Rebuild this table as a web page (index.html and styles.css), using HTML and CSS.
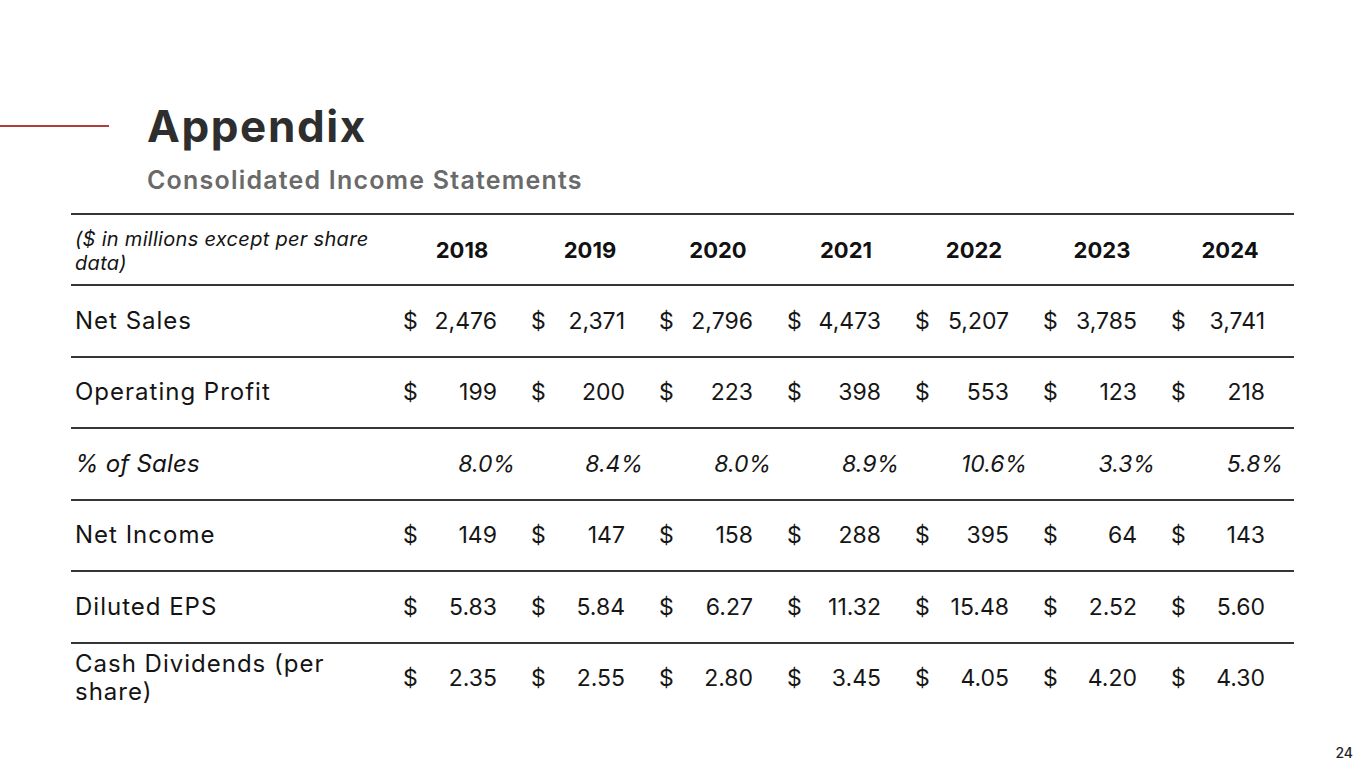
FILE: index.html
```html
<!DOCTYPE html>
<html lang="en">
<head>
<meta charset="utf-8">
<title>Appendix</title>
<link rel="stylesheet" href="styles.css">
</head>
<body>
<div class="slide">
  <div class="title-row">
    <div class="accent"></div>
    <h1 class="title">Appendix</h1>
  </div>
  <h2 class="subtitle">Consolidated Income Statements</h2>

  <div class="fin-table">
    <div class="row head">
      <div class="label note">($ in millions except per share<br>data)</div>
      <div class="year">2018</div>
      <div class="year">2019</div>
      <div class="year">2020</div>
      <div class="year">2021</div>
      <div class="year">2022</div>
      <div class="year">2023</div>
      <div class="year">2024</div>
    </div>

    <div class="row">
      <div class="label">Net Sales</div>
      <div class="val"><span>$</span><span>2,476</span></div>
      <div class="val"><span>$</span><span>2,371</span></div>
      <div class="val"><span>$</span><span>2,796</span></div>
      <div class="val"><span>$</span><span>4,473</span></div>
      <div class="val"><span>$</span><span>5,207</span></div>
      <div class="val"><span>$</span><span>3,785</span></div>
      <div class="val"><span>$</span><span>3,741</span></div>
    </div>

    <div class="row">
      <div class="label">Operating Profit</div>
      <div class="val"><span>$</span><span>199</span></div>
      <div class="val"><span>$</span><span>200</span></div>
      <div class="val"><span>$</span><span>223</span></div>
      <div class="val"><span>$</span><span>398</span></div>
      <div class="val"><span>$</span><span>553</span></div>
      <div class="val"><span>$</span><span>123</span></div>
      <div class="val"><span>$</span><span>218</span></div>
    </div>

    <div class="row">
      <div class="label em">% of Sales</div>
      <div class="pct">8.0%</div>
      <div class="pct">8.4%</div>
      <div class="pct">8.0%</div>
      <div class="pct">8.9%</div>
      <div class="pct">10.6%</div>
      <div class="pct">3.3%</div>
      <div class="pct">5.8%</div>
    </div>

    <div class="row">
      <div class="label">Net Income</div>
      <div class="val"><span>$</span><span>149</span></div>
      <div class="val"><span>$</span><span>147</span></div>
      <div class="val"><span>$</span><span>158</span></div>
      <div class="val"><span>$</span><span>288</span></div>
      <div class="val"><span>$</span><span>395</span></div>
      <div class="val"><span>$</span><span>64</span></div>
      <div class="val"><span>$</span><span>143</span></div>
    </div>

    <div class="row">
      <div class="label">Diluted EPS</div>
      <div class="val"><span>$</span><span>5.83</span></div>
      <div class="val"><span>$</span><span>5.84</span></div>
      <div class="val"><span>$</span><span>6.27</span></div>
      <div class="val"><span>$</span><span>11.32</span></div>
      <div class="val"><span>$</span><span>15.48</span></div>
      <div class="val"><span>$</span><span>2.52</span></div>
      <div class="val"><span>$</span><span>5.60</span></div>
    </div>

    <div class="row last">
      <div class="label">Cash Dividends (per<br>share)</div>
      <div class="val"><span>$</span><span>2.35</span></div>
      <div class="val"><span>$</span><span>2.55</span></div>
      <div class="val"><span>$</span><span>2.80</span></div>
      <div class="val"><span>$</span><span>3.45</span></div>
      <div class="val"><span>$</span><span>4.05</span></div>
      <div class="val"><span>$</span><span>4.20</span></div>
      <div class="val"><span>$</span><span>4.30</span></div>
    </div>
  </div>

  <div class="page-num">24</div>
</div>
</body>
</html>
```

FILE: styles.css
```css
html, body {
  margin: 0;
  padding: 0;
  background: #ffffff;
}

body {
  font-family: Inter, "Noto Sans", sans-serif;
  color: #161616;
}

.slide {
  width: 1365px;
  height: 768px;
  box-sizing: border-box;
  padding-top: 104px;
  display: flex;
  flex-direction: column;
  overflow: hidden;
}

.title-row {
  display: flex;
  align-items: center;
  gap: 38px;
}

.accent {
  width: 109px;
  height: 2px;
  background: #b23b3b;
  flex: none;
}

.title {
  margin: 0;
  font-size: 44px;
  line-height: 1;
  font-weight: 700;
  color: #2e2e2e;
  letter-spacing: 1.6px;
}

.subtitle {
  margin: 20px 0 0 147px;
  font-size: 25px;
  line-height: 1;
  font-weight: 600;
  color: #6a6a6a;
  letter-spacing: 1.2px;
}

.fin-table {
  margin: 20px 0 0 71px;
  width: 1223px;
}

.row {
  display: grid;
  grid-template-columns: 327px repeat(7, 128px);
  height: 71.5px;
  box-sizing: border-box;
  border-top: 2px solid #363636;
  align-items: center;
  font-size: 23px;
  line-height: 28px;
}

.row.head {
  height: 71px;
}

.label {
  padding-left: 4px;
  color: #141414;
  font-size: 24px;
  letter-spacing: 1px;
}

.label.note {
  font-style: italic;
  font-size: 20px;
  line-height: 24px;
  letter-spacing: 0.3px;
  padding-top: 2px;
}

.label.em {
  font-style: italic;
  letter-spacing: 0.2px;
}

.year {
  text-align: center;
  font-weight: 700;
  font-size: 22px;
  color: #111;
}

.val {
  display: flex;
  justify-content: space-between;
  padding: 0 29px 0 5px;
}

.pct {
  text-align: right;
  padding-right: 11px;
  font-style: italic;
}

.page-num {
  margin-top: auto;
  align-self: flex-end;
  padding: 0 12px 8px 0;
  font-size: 14px;
  line-height: 1;
  font-weight: 500;
  color: #222;
}
```
